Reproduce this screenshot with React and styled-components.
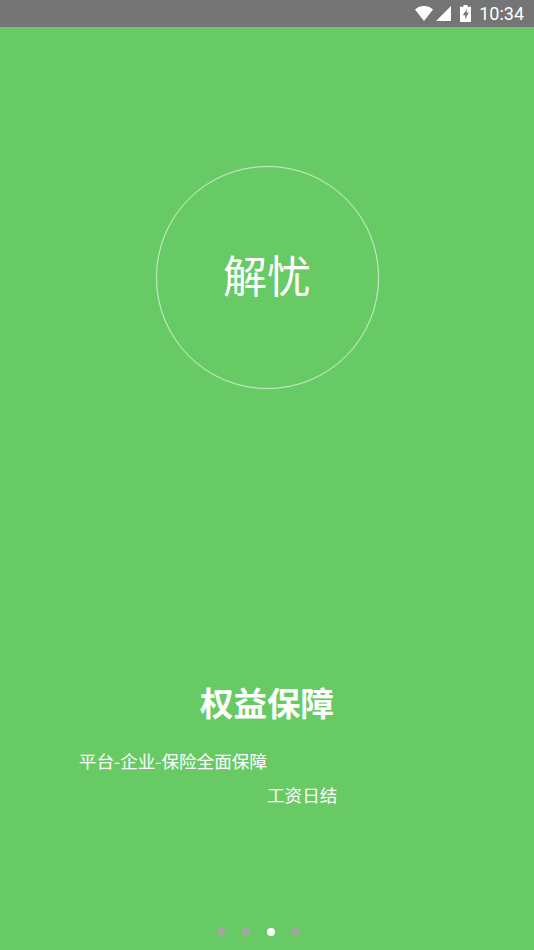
import React from "react";
import styled, { createGlobalStyle } from "styled-components";

const Global = createGlobalStyle`
  html, body { margin: 0; padding: 0; background: #68ca64; }
  #root { width: 534px; height: 950px; }
`;

const Screen = styled.div`
  width: 534px;
  height: 950px;
  display: flex;
  flex-direction: column;
  overflow: hidden;
  background: #68ca64;
  color: #fff;
  font-family: "Noto Sans CJK SC", "Noto Sans", sans-serif;
`;

const StatusBar = styled.div`
  height: 27px;
  flex: none;
  display: flex;
  align-items: center;
  justify-content: flex-end;
  padding-right: 10px;
  background: #757575;
`;

const Clock = styled.span`
  font: 400 18px/27px Roboto, sans-serif;
  margin-left: 8px;
  width: 45px;
  text-align: right;
`;

const Icon = styled.svg`
  display: block;
  flex: none;
  margin-left: ${(p) => p.$gap || 0}px;
`;

const Body = styled.main`
  flex: 1;
  display: flex;
  flex-direction: column;
  align-items: center;
  padding-top: 139px;
`;

const Ring = styled.div`
  box-sizing: border-box;
  width: 223px;
  height: 223px;
  padding-bottom: 8px;
  display: flex;
  align-items: center;
  justify-content: center;
  border: 1px solid rgba(255, 255, 255, 0.6);
  box-shadow: 0 0 1px rgba(255, 255, 255, 0.6);
  border-radius: 50%;
  font-size: 44px;
  line-height: 1;
`;

const Title = styled.h1`
  margin: 293px 0 0;
  font-size: 33.5px;
  line-height: 40px;
  font-weight: 700;
`;

const Lines = styled.div`
  width: 100%;
  margin-top: 22px;
  font-size: 17.6px;
  line-height: 34px;
`;

const LineEnd = styled.div`
  width: 50%;
  text-align: right;
`;

const LineStart = styled.div`
  margin-left: 50%;
`;

const Dots = styled.div`
  display: flex;
  gap: 16.7px;
  margin-top: auto;
  margin-bottom: 14px;
  margin-right: 17px;
`;

const Dot = styled.span`
  width: 8px;
  height: 8px;
  border-radius: 50%;
  background: ${(p) => (p.$active ? "#ffffff" : "#a5a5a5")};
`;

export default function App() {
  return (
    <Screen>
      <Global />
      <StatusBar>
        <Icon width="18" height="15" viewBox="0 0 18 15">
          <path d="M0 3.4C2.500 1.200 5.500 0 9 0s6.500 1.200 9 3.400L9 15z" fill="#fff" />
        </Icon>
        <Icon $gap={3} width="15" height="15" viewBox="0 0 15 15">
          <path d="M15 0v15H0z" fill="#fff" />
        </Icon>
        <Icon $gap={9} width="11" height="17" viewBox="0 0 11 17">
          <path d="M3.500 0h4v1.800H11V17H0V1.800h3.500z" fill="#fff" />
          <path d="M7.200 3.600 2.800 10.200h2.400v4.200l3.600-6.800H6.400z" fill="#757575" />
        </Icon>
        <Clock>10:34</Clock>
      </StatusBar>
      <Body>
        <Ring>解忧</Ring>
        <Title>权益保障</Title>
        <Lines>
          <LineEnd>平台-企业-保险全面保障</LineEnd>
          <LineStart>工资日结</LineStart>
        </Lines>
        <Dots>
          <Dot />
          <Dot />
          <Dot $active />
          <Dot />
        </Dots>
      </Body>
    </Screen>
  );
}
